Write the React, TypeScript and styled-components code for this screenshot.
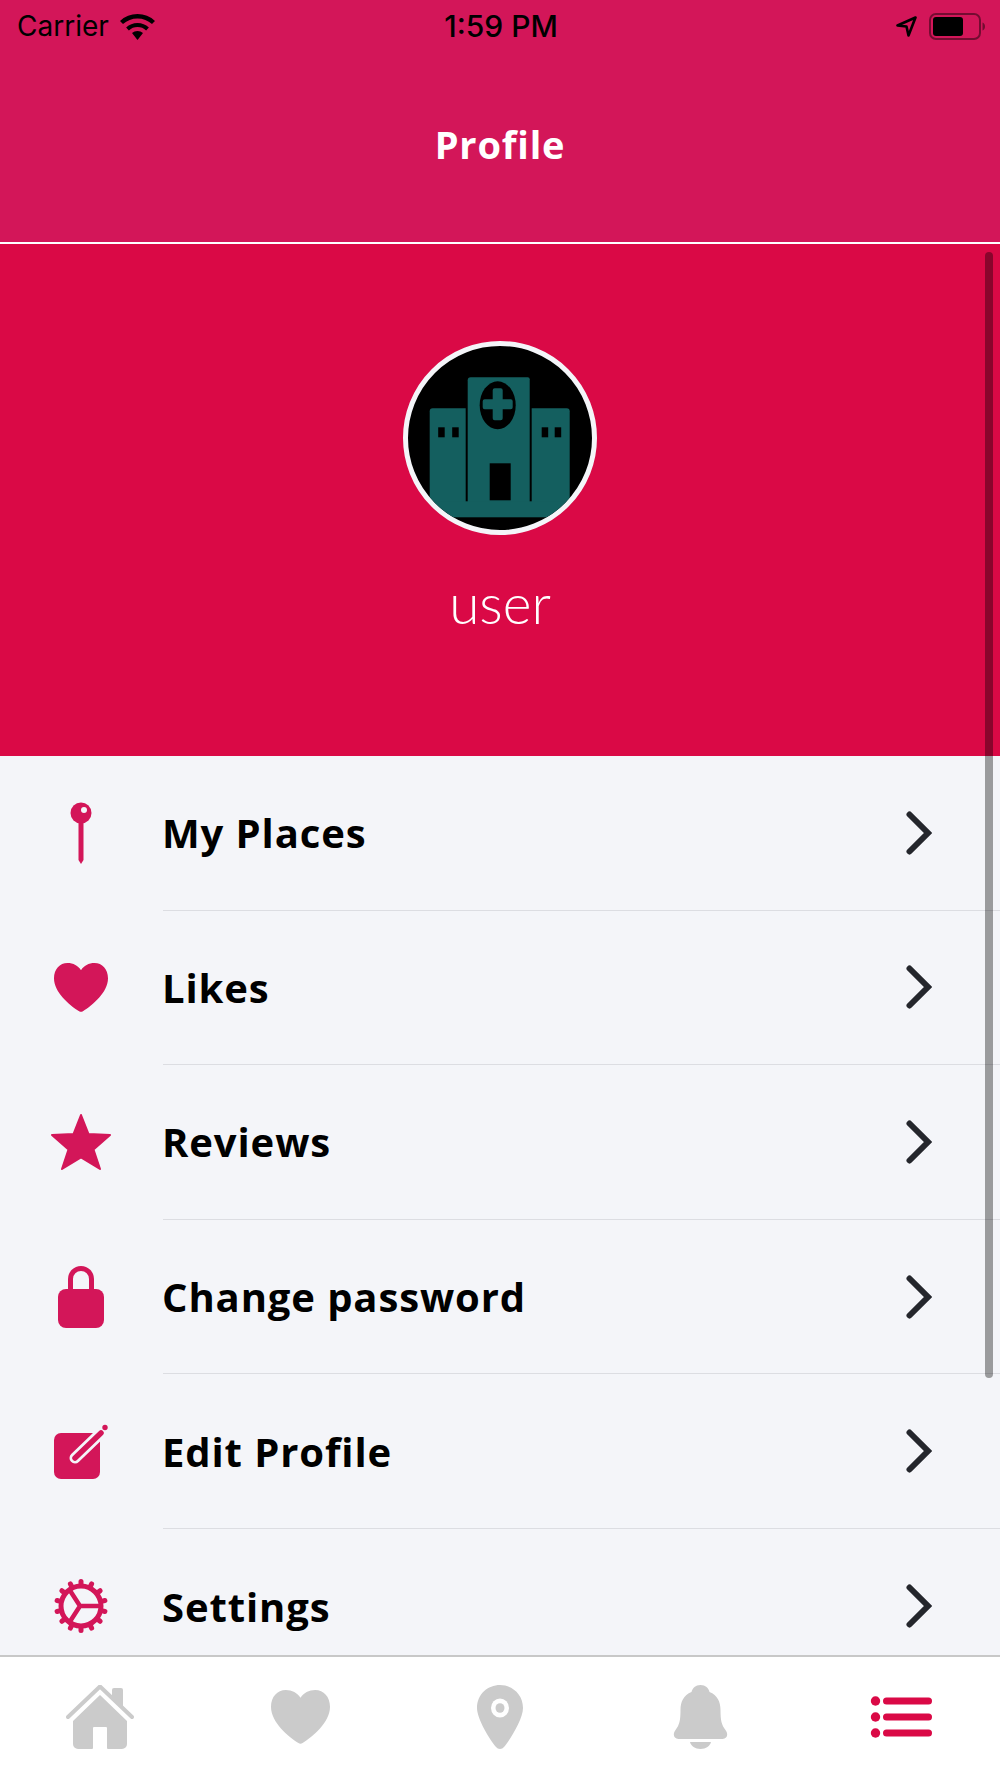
import React from "react";
import styled, { createGlobalStyle } from "styled-components";

const Global = createGlobalStyle`
  html, body { margin: 0; padding: 0; background: #f4f5f9; }
  body { font-family: "Open Sans", "Noto Sans", sans-serif; }
`;

const PINK = "#d31659";
const RED = "#da0946";
const SHEET = "#f4f5f9";

const Page = styled.div`
  position: relative;
  width: 1000px;
  height: 1778px;
  overflow: hidden;
  display: flex;
  flex-direction: column;
  background: ${SHEET};
`;

const Header = styled.header`
  height: 244px;
  box-sizing: border-box;
  flex: none;
  background: ${PINK};
  display: flex;
  flex-direction: column;
  border-bottom: 2px solid #fff;
`;

const StatusBar = styled.div`
  height: 52px;
  display: grid;
  grid-template-columns: 1fr auto 1fr;
  align-items: center;
  padding: 0 15px 0 17px;
  color: #000;
  font-family: "Inter", "Liberation Sans", sans-serif;
  font-size: 28px;
`;

const StatusLeft = styled.div`
  display: flex;
  align-items: center;
  gap: 11px;
`;

const StatusTime = styled.div`
  font-weight: 500;
  font-size: 30px;
`;

const StatusRight = styled.div`
  display: flex;
  align-items: center;
  justify-content: flex-end;
  gap: 12px;
`;

const Title = styled.h1`
  margin: 0;
  flex: 1;
  padding-bottom: 6px;
  display: flex;
  align-items: center;
  justify-content: center;
  color: #fff;
  font-size: 38px;
  font-weight: 700;
  letter-spacing: 0.8px;
`;

const Hero = styled.section`
  height: 512px;
  flex: none;
  background: ${RED};
  display: flex;
  flex-direction: column;
  align-items: center;
  padding-top: 97px;
  box-sizing: border-box;
`;

const Avatar = styled.div`
  width: 194px;
  height: 194px;
  box-sizing: border-box;
  border: 5px solid ${SHEET};
  border-radius: 50%;
  overflow: hidden;
  background: #000;
  svg { display: block; }
`;

const UserName = styled.div`
  margin-top: 38px;
  color: #fff;
  font-family: "Lato", sans-serif;
  font-size: 55px;
  line-height: 60px;
  font-weight: 300;
`;

const List = styled.ul`
  list-style: none;
  margin: 0;
  padding: 0;
  height: 899px;
  flex: none;
  overflow: hidden;
`;

const Row = styled.li`
  height: 154.600px;
  box-sizing: border-box;
  display: grid;
  grid-template-columns: 163px 1fr;
  align-items: center;
`;

const IconCell = styled.div`
  display: flex;
  justify-content: center;
  padding-right: 1px;
  svg { display: block; }
`;

const RowBody = styled.div<{ $last?: boolean }>`
  height: 100%;
  box-sizing: border-box;
  display: flex;
  align-items: center;
  justify-content: space-between;
  padding-right: 68px;
  border-bottom: ${(p) => (p.$last ? "none" : "1.500px solid #dcdde2")};
`;

const RowLabel = styled.span`
  color: #000;
  font-size: 40px;
  font-weight: 700;
  letter-spacing: 0.9px;
  margin-left: -1px;
`;

const TabBar = styled.nav`
  flex: 1;
  background: #fff;
  border-top: 2px solid #c8c8c8;
  display: grid;
  grid-template-columns: repeat(5, 1fr);
  padding-top: 28px;
  box-sizing: border-box;
`;

const Tab = styled.div`
  display: flex;
  justify-content: center;
  align-items: flex-start;
  svg { display: block; }
`;

const ScrollThumb = styled.div`
  position: absolute;
  top: 252px;
  right: 7px;
  width: 8px;
  height: 1126px;
  border-radius: 4px;
  background: rgba(0, 0, 0, 0.37);
`;

const HEART =
  "M28 8C31 3 36 0 42 0C50 0 56 7 56 17C56 33 40 47 30 54a3.500 3.500 0 0 1-4 0C16 47 0 33 0 17C0 7 6 0 14 0C20 0 25 3 28 8Z";

const Wifi = () => (
  <svg width="35" height="27" viewBox="0 0 35 27">
    <path d="M17.500 27l-5.500-7a8.500 8.500 0 0 1 11 0Z" fill="#000" />
    <path d="M7.500 16a14.500 14.500 0 0 1 20 0" fill="none" stroke="#000" strokeWidth="4" />
    <path d="M1.500 9.500a23.500 23.500 0 0 1 32 0" fill="none" stroke="#000" strokeWidth="4.400" />
  </svg>
);

const Arrow = () => (
  <svg width="21" height="21" viewBox="0 0 21 21">
    <path d="M19.500 1.500L1.500 9.500l9 1 2 9Z" fill="none" stroke="#000" strokeWidth="2.600" strokeLinejoin="round" />
  </svg>
);

const Battery = () => (
  <svg width="56" height="27" viewBox="0 0 56 27">
    <rect x="1" y="1" width="50" height="25" rx="6" fill="none" stroke="#000" strokeOpacity="0.450" strokeWidth="2" />
    <rect x="4" y="4" width="30" height="19" rx="3" fill="#000" />
    <path d="M53.500 9.500c1.500.5 2.500 2 2.500 4s-1 3.500-2.500 4Z" fill="#000" fillOpacity="0.450" />
  </svg>
);

const Hospital = () => (
  <svg width="184" height="184" viewBox="28.300 25.700 184 184">
    <g fill="#145f5f">
      <path d="M53 88h33v94H50V91a3 3 0 0 1 3-3Z" />
      <path d="M91 57h57a2 2 0 0 1 2 2v123H88V60a3 3 0 0 1 3-3Z" />
      <path d="M152 88h35a3 3 0 0 1 3 3v91h-38Z" />
      <rect x="50" y="181" width="140" height="16" />
    </g>
    <g fill="#000">
      <ellipse cx="118" cy="85" rx="18" ry="24" />
      <rect x="110" y="143" width="21" height="37" />
      <rect x="58.500" y="107" width="6.500" height="10" />
      <rect x="72.500" y="107" width="6.500" height="10" />
      <rect x="162" y="107" width="6.500" height="10" />
      <rect x="175" y="107" width="6.500" height="10" />
    </g>
    <path d="M113 70a2 2 0 0 1 2-2h6a2 2 0 0 1 2 2v9h8a2 2 0 0 1 2 2v6a2 2 0 0 1-2 2h-8v9a2 2 0 0 1-2 2h-6a2 2 0 0 1-2-2v-9h-8a2 2 0 0 1-2-2v-6a2 2 0 0 1 2-2h8Z" fill="#145f5f" />
  </svg>
);

const PinIcon = () => (
  <svg width="22" height="62" viewBox="0 0 22 62">
    <path d="M8.500 19h5v39l-2.500 4l-2.500-4Z" fill={PINK} />
    <circle cx="11" cy="11" r="10.500" fill={PINK} />
    <circle cx="14" cy="8" r="3" fill={SHEET} />
  </svg>
);

const HeartIcon = () => (
  <svg width="54" height="50" viewBox="0 0 56 56" preserveAspectRatio="none">
    <path d={HEART} fill={PINK} />
  </svg>
);

const StarIcon = () => (
  <svg width="62" height="58" viewBox="0 0 62 58">
    <path
      d="M31 2L38.500 21L60 22L43.500 36.500L50 56L31 44.500L12 56L18.500 36.500L2 22L23.500 21Z"
      fill={PINK}
      stroke={PINK}
      strokeWidth="2"
      strokeLinejoin="round"
    />
  </svg>
);

const LockIcon = () => (
  <svg width="46" height="62" viewBox="0 0 46 62">
    <path d="M12.500 26V13a10.500 10.500 0 0 1 21 0V26" fill="none" stroke={PINK} strokeWidth="5" />
    <rect x="0" y="23" width="46" height="39" rx="8" fill={PINK} />
  </svg>
);

const EditIcon = () => (
  <svg width="56" height="56" viewBox="0 0 56 56" style={{ marginLeft: 2 }}>
    <rect x="0" y="9" width="46" height="46" rx="7" fill={PINK} />
    <path d="M21 34L48 8" stroke={SHEET} strokeWidth="11" strokeLinecap="round" />
    <path d="M21 34L47 9" stroke={PINK} strokeWidth="5.500" strokeLinecap="round" />
    <circle cx="51" cy="3.500" r="2.700" fill={PINK} />
  </svg>
);

const GearIcon = () => {
  const teeth = Array.from({ length: 14 }, (_, i) => (i * 360) / 14);
  return (
    <svg width="54" height="54" viewBox="0 0 54 54">
      <circle cx="27" cy="27" r="20" fill="none" stroke={PINK} strokeWidth="5" />
      {teeth.map((a) => (
        <line
          key={a}
          x1="27"
          y1="5"
          x2="27"
          y2="2.500"
          transform={`rotate(${a} 27 27)`}
          stroke={PINK}
          strokeWidth="5"
          strokeLinecap="round"
        />
      ))}
      <path d="M26 27L15 10M26 27L46 27M26 27L15 44" fill="none" stroke={PINK} strokeWidth="4.500" />
    </svg>
  );
};

const Chevron = () => (
  <svg width="26" height="44" viewBox="0 0 26 44">
    <path d="M3.500 3.500L22 22L3.500 40.500" fill="none" stroke="#24262c" strokeWidth="6" strokeLinecap="round" strokeLinejoin="miter" />
  </svg>
);

const GREY = "#cbcbcb";

const HomeTab = () => (
  <svg width="68" height="64" viewBox="0 0 68 64">
    <path d="M2 32L34 1.500L66 32" fill="none" stroke={GREY} strokeWidth="4" strokeLinecap="round" strokeLinejoin="round" />
    <path d="M46 13V5a2 2 0 0 1 2-2h7a2 2 0 0 1 2 2V24Z" fill={GREY} />
    <path
      d="M34 10L61 36V59a5 5 0 0 1-5 5H42a1 1 0 0 1-1-1V43a1 1 0 0 0-1-1H28a1 1 0 0 0-1 1V63a1 1 0 0 1-1 1H12a5 5 0 0 1-5-5V36Z"
      fill={GREY}
    />
  </svg>
);

const HeartTab = () => (
  <svg width="59" height="55" viewBox="0 0 56 56" preserveAspectRatio="none" style={{ marginTop: 5 }}>
    <path d={HEART} fill={GREY} />
  </svg>
);

const PinTab = () => (
  <svg width="46" height="64" viewBox="0 0 46 64">
    <path d="M23 0C35 0 46 9 46 23C46 34 33 55 27 62a5 5 0 0 1-8 0C13 55 0 34 0 23C0 9 11 0 23 0Z" fill={GREY} />
    <ellipse cx="23" cy="23" rx="9" ry="9.500" fill="#fff" />
    <ellipse cx="23" cy="23" rx="4.500" ry="4.800" fill={GREY} />
  </svg>
);

const BellTab = () => (
  <svg width="55" height="64" viewBox="0 0 55 64">
    <path
      d="M27.500 0c5 0 8 3 9 7c8 3 11 10 11 18c0 10 1 15 5 20c3 4 2 9-3 9H5.500c-5 0-6-5-3-9c4-5 5-10 5-20c0-8 3-15 11-18c1-4 4-7 9-7Z"
      fill={GREY}
    />
    <path d="M17 57H38c-1 4-5 7-10.500 7s-9.500-3-10.500-7Z" fill={GREY} />
  </svg>
);

const ListTab = () => (
  <svg width="62" height="64" viewBox="0 0 62 64" style={{ marginLeft: 2 }}>
    {[16, 32, 48].map((y) => (
      <g key={y} fill={RED}>
        <circle cx="5.500" cy={y} r="4.700" />
        <rect x="13" y={y - 3.500} width="49" height="7" rx="3.500" />
      </g>
    ))}
  </svg>
);

const rows: { label: string; icon: React.ReactNode }[] = [
  { label: "My Places", icon: <PinIcon /> },
  { label: "Likes", icon: <HeartIcon /> },
  { label: "Reviews", icon: <StarIcon /> },
  { label: "Change password", icon: <LockIcon /> },
  { label: "Edit Profile", icon: <EditIcon /> },
  { label: "Settings", icon: <GearIcon /> },
];

export default function App() {
  return (
    <Page>
      <Global />
      <Header>
        <StatusBar>
          <StatusLeft>
            Carrier
            <Wifi />
          </StatusLeft>
          <StatusTime>1:59 PM</StatusTime>
          <StatusRight>
            <Arrow />
            <Battery />
          </StatusRight>
        </StatusBar>
        <Title>Profile</Title>
      </Header>
      <Hero>
        <Avatar>
          <Hospital />
        </Avatar>
        <UserName>user</UserName>
      </Hero>
      <List>
        {rows.map((r, i) => (
          <Row key={r.label}>
            <IconCell>{r.icon}</IconCell>
            <RowBody $last={i === rows.length - 1}>
              <RowLabel>{r.label}</RowLabel>
              <Chevron />
            </RowBody>
          </Row>
        ))}
      </List>
      <TabBar>
        <Tab><HomeTab /></Tab>
        <Tab><HeartTab /></Tab>
        <Tab><PinTab /></Tab>
        <Tab><BellTab /></Tab>
        <Tab><ListTab /></Tab>
      </TabBar>
      <ScrollThumb />
    </Page>
  );
}
